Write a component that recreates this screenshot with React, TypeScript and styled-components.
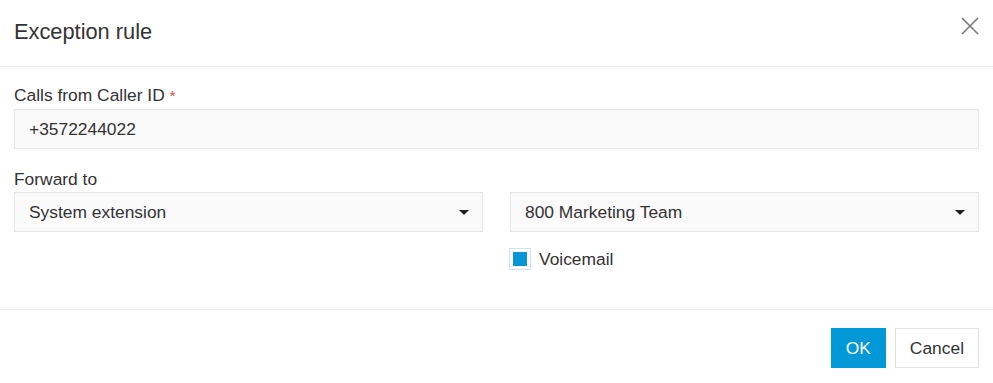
import styled, { createGlobalStyle } from "styled-components";

const GlobalStyle = createGlobalStyle`
  body {
    margin: 0;
    background: #ffffff;
    font-family: "Liberation Sans", Arial, sans-serif;
    color: #333333;
  }
  * {
    box-sizing: border-box;
  }
`;

const App = () => {
  return (
    <Dialog>
      <GlobalStyle />
      <Header>
        <Title>Exception rule</Title>
        <CloseButton aria-label="Close">
          <svg width="18" height="18" viewBox="0 0 18 18">
            <path d="M1 1 L17 17 M17 1 L1 17" stroke="#7a7a7a" strokeWidth="1.6" fill="none" />
          </svg>
        </CloseButton>
      </Header>
      <Body>
        <Field>
          <Label>
            Calls from Caller ID <Required>*</Required>
          </Label>
          <Input defaultValue="+3572244022" />
        </Field>
        <Field>
          <Label>Forward to</Label>
          <Columns>
            <Select>
              <span>System extension</span>
              <Caret />
            </Select>
            <Select>
              <span>800 Marketing Team</span>
              <Caret />
            </Select>
          </Columns>
        </Field>
        <Columns>
          <div />
          <CheckRow>
            <CheckBox>
              <CheckFill />
            </CheckBox>
            <span>Voicemail</span>
          </CheckRow>
        </Columns>
      </Body>
      <Footer>
        <Button primary>OK</Button>
        <Button>Cancel</Button>
      </Footer>
    </Dialog>
  );
};

export default App;

const Dialog = styled.div`
  width: 993px;
  height: 383px;
  background: #ffffff;
  display: flex;
  flex-direction: column;
  font-size: 17.4px;
`;

const Header = styled.div`
  height: 67px;
  padding: 0 14px;
  display: flex;
  justify-content: space-between;
  align-items: flex-start;
  border-bottom: 1px solid #ececec;
`;

const Title = styled.h1`
  margin: 20px 0 0;
  font-size: 21.8px;
  line-height: 24px;
  font-weight: normal;
  color: #333333;
`;

const CloseButton = styled.div`
  margin-top: 17px;
  width: 18px;
  height: 18px;
  display: flex;
  cursor: pointer;
`;

const Body = styled.div`
  padding: 18px 14px 0;
  height: 242px;
  display: flex;
  flex-direction: column;
`;

const Field = styled.div`
  display: flex;
  flex-direction: column;
  margin-bottom: 20px;
  &:nth-child(2) {
    margin-bottom: 16px;
  }
`;

const Label = styled.label`
  line-height: 20px;
  margin-bottom: 3px;
  color: #333333;
`;

const Required = styled.span`
  color: #e5463b;
  font-size: 15px;
`;

const Input = styled.input`
  height: 40px;
  width: 100%;
  border: 1px solid #e6e6e6;
  background: #fafafa;
  padding: 0 14px;
  font-family: inherit;
  font-size: 17.4px;
  color: #333333;
  outline: none;
`;

const Columns = styled.div`
  display: grid;
  grid-template-columns: 1fr 1fr;
  column-gap: 27px;
`;

const Select = styled.div`
  height: 40px;
  border: 1px solid #e6e6e6;
  background: #fafafa;
  padding: 0 13px 0 14px;
  display: flex;
  align-items: center;
  justify-content: space-between;
  color: #333333;
  cursor: pointer;
`;

const Caret = styled.span`
  width: 0;
  height: 0;
  border-left: 5px solid transparent;
  border-right: 5px solid transparent;
  border-top: 5px solid #222222;
`;

const CheckRow = styled.label`
  display: flex;
  align-items: center;
  gap: 8px;
  margin-left: -1px;
  color: #333333;
  line-height: 22px;
`;

const CheckBox = styled.span`
  width: 22px;
  height: 22px;
  border: 1px solid #c9e5f4;
  background: #ffffff;
  display: flex;
  align-items: center;
  justify-content: center;
`;

const CheckFill = styled.span`
  width: 14px;
  height: 14px;
  background: #0a96d4;
`;

const Footer = styled.div`
  border-top: 1px solid #ececec;
  padding: 18px 14px 0;
  display: flex;
  justify-content: flex-end;
  gap: 9px;
  flex: 1;
`;

const Button = styled.button<{ primary?: boolean }>`
  height: 40px;
  padding: 0 14px;
  font-family: inherit;
  font-size: 17.4px;
  border: 1px solid ${(p) => (p.primary ? "#0098d6" : "#e2e2e2")};
  background: ${(p) => (p.primary ? "#0098d6" : "#ffffff")};
  color: ${(p) => (p.primary ? "#ffffff" : "#333333")};
  cursor: pointer;
`;
